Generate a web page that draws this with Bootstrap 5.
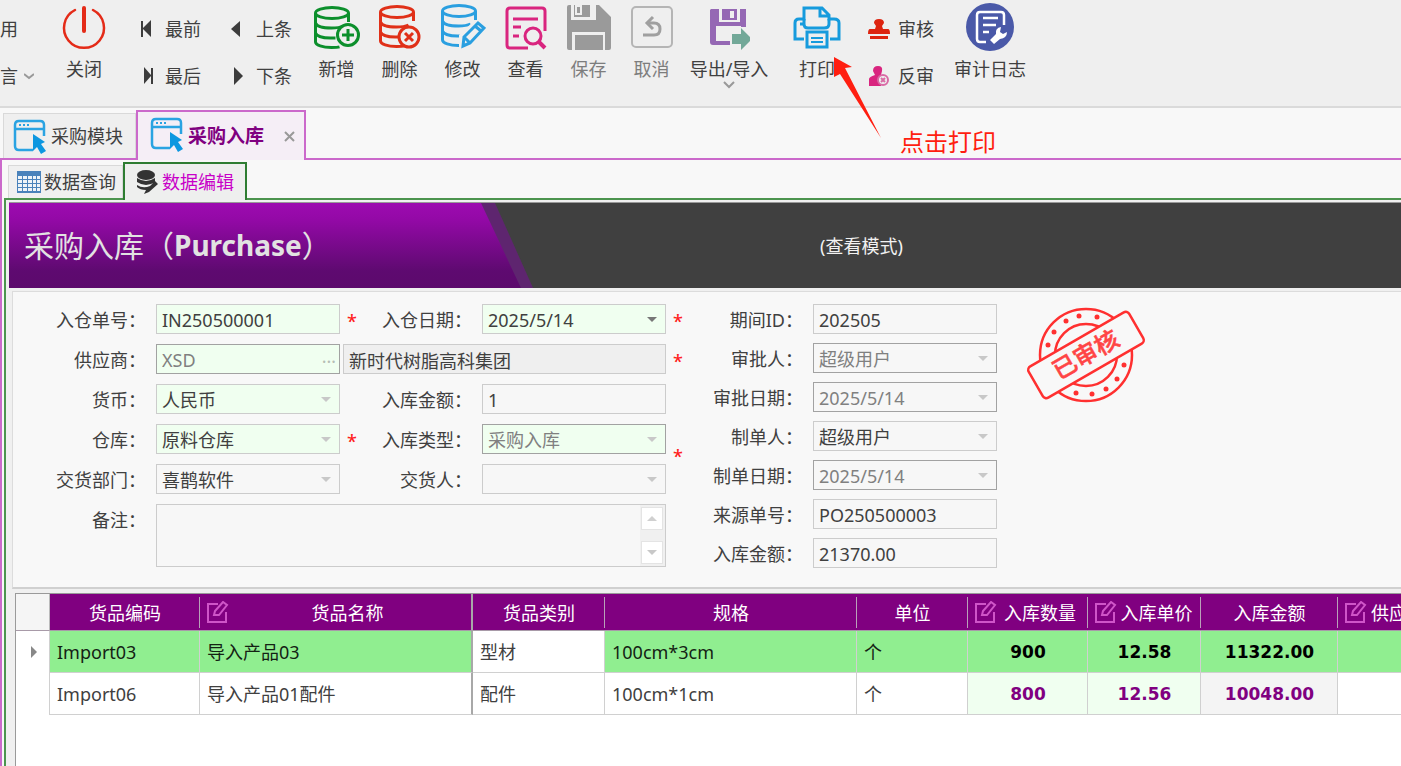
<!DOCTYPE html>
<html lang="zh-CN">
<head>
<meta charset="utf-8">
<meta name="viewport" content="width=device-width, initial-scale=1">
<title>采购入库</title>
<link href="https://cdn.jsdelivr.net/npm/bootstrap@5.3.0/dist/css/bootstrap.min.css" rel="stylesheet">
<style>
  body { font-family: "Noto Sans", "Noto Sans CJK SC", sans-serif; font-size: 18px; line-height: 24px; color: #404040; background: #f8f8f8; }
  button { font: inherit; color: inherit; background: none; border: 0; padding: 0; }
  svg { display: block; flex: none; }

  /* toolbar */
  .tool-strip { background: #efefef; border-bottom: 2px solid #dadada; height: 108px; white-space: nowrap; }
  .tool-big { display: flex; flex-direction: column; align-items: center; width: 63px; padding-top: 4px; gap: 7px; }
  .tool-pair { display: flex; flex-direction: column; gap: 23px; padding-top: 17px; }
  .tool-pair button { display: flex; align-items: center; gap: 8px; }
  .w-edge button { gap: 6px; }
  .w-close { width: 82px; } .w-nav1 { width: 90px; } .w-nav2 { width: 90px; }
  .w-edge { width: 43px; } .w-io { width: 92px; } .w-print { width: 84px; } .w-audit { width: 85px; }
  .is-off { color: #7d7d7d; }
  .callout-arrow { position: absolute; left: 58px; top: 56px; z-index: 3; }
  .callout-text { position: absolute; left: 125px; top: 125px; font-size: 24px; line-height: 34px; color: #ff1e10; z-index: 3; }

  /* module tabs */
  .mod-tabs { padding-left: 3px; height: 50px; }
  .mod-tab { border: 1px solid #d9d9d9; border-bottom: 0; background: #efefef; height: 45px; padding: 0 12px 0 9px; gap: 4px; display: flex; align-items: center; color: #404040; text-decoration: none; }
  .mod-tab.is-on { height: 50px; padding: 0 9px 0 12px; border: 2px solid #cb69cb; border-bottom: 0; background: #f5eef6; color: #800080; font-weight: 700; font-size: 19px; margin-bottom: -2px; }
  .mod-body { border: 2px solid #cb69cb; border-right: 0; border-bottom: 0; padding: 2px 0 0 2px; }

  /* page tabs */
  .pg-tabs { padding-left: 4px; height: 36px; }
  .pg-tab { border: 1px solid #d9d9d9; border-bottom: 0; background: #f0f0f0; height: 33px; padding: 0 6px 0 7px; gap: 2px; display: flex; align-items: center; color: #404040; text-decoration: none; }
  .pg-tab.is-on { height: 38px; border: 2px solid #2e7d32; border-bottom: 0; background: #eeefee; color: #c800c8; padding: 0 11px; gap: 4px; margin-bottom: -2px; position: relative; }
  .pg-body { border: 2px solid #4c944f; border-right: 0; border-bottom: 0; background: #f0f0f0; padding: 2px 0 0 3px; }

  /* banner */
  .banner { background: #404040; height: 86px; border-top: 1px solid #999; }
  .banner-edge { background: #5e256f; width: 524px; clip-path: polygon(0 0, 486px 0, 100% 100%, 0 100%); }
  .banner-title { background: linear-gradient(#9d0bb0, #9309a6 20%, #5e0a70 80%, #5c0a6c); color: #e2e2e2; height: 100%; width: 512px; clip-path: polygon(0 0, 472px 0, 100% 100%, 0 100%); display: flex; align-items: center; padding-left: 15px; }
  .banner-title h1 { font-size: 28px; font-weight: 700; margin: 0; display: flex; align-items: center; }
  .title-cn { font-size: 30px; font-weight: 400; }
  .banner-mode { color: #f2f2f2; margin-left: 287px; }

  /* form */
  .form-zone { background: #f8f8f8; border: 1px solid #dcdcdc; border-right: 0; margin: 3px 0 0 3px; height: 298px; padding-top: 12px; border-bottom: 2px solid #d0d0d0; }
  .main-grid { display: grid; grid-template-columns: 133px 184px 25px 117px 184px 25px; grid-auto-rows: 30px; row-gap: 10px; margin-left: 10px; }
  .side-grid { display: grid; grid-template-columns: 122px 184px; grid-auto-rows: 30px; row-gap: 9px; }
  .main-grid label, .side-grid label { text-align: right; padding-right: 10px; line-height: 32px; white-space: nowrap; }
  .fld { width: 100%; min-width: 0; height: 30px; border: 1px solid #cccccc; background-color: #f7f7f7; border-radius: 0; padding: 2px 5px 0; font: inherit; line-height: 24px; color: #404040; appearance: none; outline: 0; }
  .fld-req { background-color: #f0fff0; }
  .fld-lock { border-color: #a2a2a2; color: #808080; }
  .fld-name { background-color: #efefef; }
  select.fld { background-repeat: no-repeat; background-position: right 8px center; background-image: url("data:image/svg+xml,%3Csvg xmlns='http://www.w3.org/2000/svg' width='10' height='5'%3E%3Cpath d='M0 0h10L5 5z' fill='%23c8c8c8'/%3E%3C/svg%3E"); }
  select.fld-live { background-image: url("data:image/svg+xml,%3Csvg xmlns='http://www.w3.org/2000/svg' width='10' height='5'%3E%3Cpath d='M0 0h10L5 5z' fill='%23777777'/%3E%3C/svg%3E"); }
  .span-name { grid-column: 3 / 6; padding-left: 3px; }
  .must { color: #ff2020; padding-left: 7px; line-height: 34px; font-weight: 500; }
  .must-low { padding-top: 15px; }
  .lookup { position: relative; }
  .lookup button { position: absolute; right: 4px; top: 0; line-height: 24px; color: #b5bdb5; }
  .memo { grid-column: 2 / 6; height: 63px; border: 1px solid #cccccc; background: #f7f7f7; display: flex; }
  .memo textarea { flex: 1; border: 0; background: transparent; resize: none; outline: 0; }
  .memo-bar { width: 25px; background: #f0f0f0; display: flex; flex-direction: column; justify-content: space-between; padding: 2px 2px 2px 1px; }
  .memo-bar button { height: 23px; background: #fff; border: 1px solid #e4e4e4; display: flex; align-items: center; justify-content: center; }
  .seal { margin-left: 27px; }

  /* goods list */
  .list-zone { background: #fff; margin: 4px 0 0 6px; border: 1px solid #9a9a9a; border-right: 0; border-bottom: 0; overflow: hidden; min-height: 190px; }
  .goods { table-layout: fixed; width: 1500px; border-collapse: separate; border-spacing: 0; }
  .goods th { height: 37px; background: #800080 linear-gradient(#b9a0b9, #b9a0b9) right center / 1px 31px no-repeat; color: #fff; font-weight: 400; text-align: center; border-bottom: 1px solid #a89aa8; padding: 2px 5px 0; white-space: nowrap; }
  .goods th.corner { background: #f5f5f5; border-right: 1px solid #bbb; }
  .goods th span { flex: 1; }
  .goods td { height: 42px; padding: 0 6px 0 7px; border-right: 1px solid #d0d0d0; border-bottom: 1px solid #d0d0d0; }
  .goods .pin { border-right: 2px solid #a8a8a8; }
  .goods th.pin { background-image: none; }
  .goods tr.cur td { background: #90ee90; color: #142214; }
  .goods tr.cur td.plain { background: #fff; color: #404040; }
  .goods tr td.gut, .goods tr.cur td.gut { background: #fff; border-bottom: 0; }
  .goods td.num { font-family: "DejaVu Sans", sans-serif; font-size: 17px; font-weight: 700; text-align: center; color: #800080; }
  .goods tr.cur td.num { color: #000; }
  .soft { background: #f0fff0; } .dim { background: #f4f4f4; }
</style>
</head>
<body>
<svg width="0" height="0" class="position-absolute" aria-hidden="true">
  <defs>
    <g id="db" fill="none" stroke-width="3"><ellipse cx="18" cy="8" rx="16.500" ry="5.500"/><path d="M1.500 8v29c0 3 7 5.500 16 5.500 3 0 6 0 8-.6M34.500 8v9M1.500 18c1 3 7 5 16 5 5 0 9-.6 12-2M1.500 28c1 3 7 5 15 5h5"/></g>
    <g id="win"><path d="M31 17V6q0-4-4-4H6Q2 2 2 6v21q0 4 4 4h14M2 10h29" fill="none" stroke="#2aa3e2" stroke-width="2.500"/><path d="M6 6h2m2 0h2m2 0h2" stroke="#2aa3e2" stroke-width="2"/><path d="M20 15l12 8-4 2 5 7-5 3-4-7-4 4z" fill="#0d97e0"/></g>
    <g id="pen" fill="none" stroke="#cf55c8" stroke-width="2"><path d="M13 3H3v18h18V11"/><path d="M9 14l1-4 8-9 4 3-8 10z"/></g>
  </defs>
</svg>

<header class="tool-strip d-flex">
  <div class="tool-pair w-edge">
    <button type="button">用</button>
    <button type="button">言<svg width="10" height="7"><path d="M0 1l5 4 5-4" fill="none" stroke="#999" stroke-width="2"/></svg></button>
  </div>
  <button type="button" class="tool-big w-close">
    <svg width="46" height="46"><path d="M14 6a20 20 0 1 0 18 0" fill="none" stroke="#e42b18" stroke-width="2.500" stroke-linecap="round"/><path d="M23 4v23" stroke="#e42b18" stroke-width="4" stroke-linecap="round"/></svg>
    <span>关闭</span>
  </button>
  <div class="tool-pair w-nav1 ps-3">
    <button type="button"><svg width="16" height="18"><path d="M0 1h2v7l8-8v17l-8-8v8H0z" fill="#3c3c3c"/></svg>最前</button>
    <button type="button"><svg width="16" height="18"><path d="M12 1h-2v7L3 0v17l7-8v8h2z" fill="#3c3c3c"/></svg>最后</button>
  </div>
  <div class="tool-pair w-nav2 ps-3">
    <button type="button"><svg width="17" height="18"><path d="M0 9l9-8v16z" fill="#3c3c3c"/></svg>上条</button>
    <button type="button"><svg width="17" height="18"><path d="M12 9L3 0v18z" fill="#3c3c3c"/></svg>下条</button>
  </div>
  <button type="button" class="tool-big">
    <svg width="46" height="46" stroke="#0c8f2c"><use href="#db" y="1"/><circle cx="34" cy="31" r="10.500" fill="#efefef" stroke-width="3"/><path d="M34 25v12M28 31h12" stroke-width="3"/></svg>
    <span>新增</span>
  </button>
  <button type="button" class="tool-big">
    <svg width="42" height="46" stroke="#e03018"><use href="#db"/><circle cx="30" cy="33" r="10" fill="#efefef" stroke-width="3"/><path d="M26 29l8 8M34 29l-8 8" stroke-width="3"/></svg>
    <span>删除</span>
  </button>
  <button type="button" class="tool-big">
    <svg width="46" height="46" stroke="#2a9fe0"><use href="#db" x="1" y="-1"/><path d="M19 48V31L35 16h11v14L28 48z" fill="#efefef" stroke="none"/><path d="M24 33L38 19l6 5-14 15-7 3zM35 22l6 5M24 33l6 6" fill="none" stroke-width="3"/></svg>
    <span>修改</span>
  </button>
  <button type="button" class="tool-big">
    <svg width="42" height="46" fill="none" stroke="#d9257f" stroke-width="3"><path d="M40 27V7q0-3-3-3H5Q2 4 2 7v34q0 3 3 3h18M8 15h25M8 23h8M8 32h6"/><circle cx="28" cy="32" r="8"/><path d="M34 38l6 6" stroke-width="4"/></svg>
    <span>查看</span>
  </button>
  <button type="button" class="tool-big is-off">
    <svg width="46" height="46"><path d="M1 3q0-2 2-2h2v15h25V1h3l12 12v31q0 2-2 2h-4V28H6v18H3q-2 0-2-2zM8 1h16v12H8zM9 31h28v15H9z" fill="#9a9a9a"/><path d="M10 2h5v8h-5z" fill="#9a9a9a" stroke="#efefef" stroke-width="2"/></svg>
    <span>保存</span>
  </button>
  <button type="button" class="tool-big is-off">
    <svg width="42" height="46" fill="none"><rect x="1" y="3" width="40" height="40" rx="4" stroke="#b5b5b5" stroke-width="2"/><path d="M12 31h11q6 0 6-6t-6-6h-6" stroke="#a0a0a0" stroke-width="3"/><path d="M22 13l-6 6 6 6" stroke="#a0a0a0" stroke-width="3"/></svg>
    <span>取消</span>
  </button>
  <button type="button" class="tool-big w-io">
    <svg width="42" height="46"><path d="M3 5h8v13h21V5h6v18h-5v-1H8v15h14v4H5q-3 0-3-3V6zM14 5h15v11H14z" fill="#9568b4"/><path d="M22 7h4v7h-4z" fill="#efefef"/><path d="M24 30h9v-6l11 11-11 11v-6h-9z" fill="#72a898"/></svg>
    <span class="d-flex flex-column align-items-center">导出/导入<svg width="12" height="8"><path d="M1 1l5 5 5-5" fill="none" stroke="#999" stroke-width="2"/></svg></span>
  </button>
  <div class="position-relative">
    <button type="button" class="tool-big w-print">
      <svg width="50" height="46" fill="none" stroke="#169bdd" stroke-width="3"><path d="M12 35H3V19q0-4 4-4h5V4h18l7 7v4h5q5 0 5 4v16h-9M28 4v8h8"/><path d="M12 15v5q0 4 4 4h16q5 0 5-4v-5" /><path d="M15 28h20v15H15z"/><path d="M19 34h12M19 38h12" stroke-width="2"/><path d="M8 20h4" stroke-width="3"/></svg>
      <span>打印</span>
    </button>
    <svg class="callout-arrow" width="50" height="84"><path d="M1 1l18 10-7 1 36 70L7 18l-6 3z" fill="#ff1e10"/></svg>
    <div class="callout-text">点击打印</div>
  </div>
  <div class="tool-pair w-audit ps-2">
    <button type="button"><svg width="23" height="24" fill="#dd2410"><path d="M8 12l1-3-2-3q0-4 5-4t5 4l-2 3 1 3h5q2 0 2 5H1q0-5 2-5zM3 19h18v3H3z"/></svg>审核</button>
    <button type="button"><svg width="23" height="24" fill="#d9257f"><path d="M8 11l-2-4q0-5 5-5t4 5l-1 4 1 4-1 7H2v-7q0-2 6-4z"/><circle cx="16" cy="16" r="5" fill="#efefef" stroke="#d96aa5" stroke-width="2"/><path d="M14 14l4 4M18 14l-4 4" stroke="#d96aa5" stroke-width="2"/></svg>反审</button>
  </div>
  <button type="button" class="tool-big w-io">
    <svg width="48" height="46" viewBox="0 0 48 46" overflow="visible"><circle cx="24" cy="23" r="24" fill="#4a59a8"/><path d="M38 21V11q0-3-3-3H14q-3 0-3 3v24q0 3 3 3h6M17 14h15M17 21h13M17 28h6" fill="none" stroke="#fff" stroke-width="2.500"/><path d="M24 36l6-6q-1-6 5-7l-1 5 3 2 4-2q0 6-7 7l-6 5z" fill="#fff"/></svg>
    <span>审计日志</span>
  </button>
</header>

<nav class="mod-tabs d-flex align-items-end">
  <a href="#" class="mod-tab"><svg width="34" height="35"><use href="#win"/></svg>采购模块</a>
  <a href="#" class="mod-tab is-on"><svg class="mb-1" width="34" height="35"><use href="#win"/></svg>采购入库<svg class="ms-3" width="11" height="11"><path d="M1 1l9 9M10 1l-9 9" stroke="#999" stroke-width="2"/></svg></a>
</nav>

<div class="mod-body">
  <nav class="pg-tabs d-flex align-items-end">
    <a href="#" class="pg-tab"><svg width="26" height="24"><path d="M1 1h24v22H1z" fill="#4a82bb"/><path d="M2 6h4v3H2zm5 0h4v3H7zm5 0h4v3h-4zm5 0h3v3h-3zm4 0h3v3h-3zM2 10h4v3H2zm5 0h4v3H7zm5 0h4v3h-4zm5 0h3v3h-3zm4 0h3v3h-3zM2 14h4v3H2zm5 0h4v3H7zm5 0h4v3h-4zm5 0h3v3h-3zm4 0h3v3h-3zM2 18h4v3H2zm5 0h4v3H7zm5 0h4v3h-4zm5 0h3v3h-3zm4 0h3v3h-3z" fill="#eef3f8"/></svg>数据查询</a>
    <a href="#" class="pg-tab is-on"><svg width="22" height="25"><ellipse cx="10" cy="5" rx="9" ry="5" fill="#333"/><path d="M1 8q9 6 18 0v4q-9 6-18 0zM1 15q6 4 13 1l-4 4q-6 0-9-3zM8 24l2-4 9-9 3 3-9 8z" fill="#333"/></svg>数据编辑</a>
  </nav>

  <main class="pg-body">
    <div class="banner d-flex align-items-center">
      <div class="banner-edge h-100"><div class="banner-title"><h1><span class="title-cn">采购入库（</span>Purchase<span class="title-cn">）</span></h1></div></div>
      <div class="banner-mode">(查看模式)</div>
    </div>

    <form class="form-zone d-flex align-items-start">
      <div class="main-grid">
        <label for="f1">入仓单号：</label><input id="f1" class="fld fld-req" value="IN250500001">
        <span class="must">*</span>
        <label for="f2">入仓日期：</label><select id="f2" class="fld fld-req fld-live"><option>2025/5/14</option></select>
        <span class="must">*</span>

        <label for="f3">供应商：</label>
        <div class="lookup"><input id="f3" class="fld fld-req fld-lock" value="XSD"><button type="button" aria-label="选择供应商">…</button></div>
        <div class="span-name"><input class="fld fld-name" aria-label="供应商名称" value="新时代树脂高科集团"></div>
        <span class="must">*</span>

        <label for="f4">货币：</label><select id="f4" class="fld fld-req"><option>人民币</option></select>
        <span></span>
        <label for="f5">入库金额：</label><input id="f5" class="fld" value="1">
        <span></span>

        <label for="f6">仓库：</label><select id="f6" class="fld fld-req"><option>原料仓库</option></select>
        <span class="must">*</span>
        <label for="f7">入库类型：</label><select id="f7" class="fld fld-req fld-lock"><option>采购入库</option></select>
        <span class="must must-low">*</span>

        <label for="f8">交货部门：</label><select id="f8" class="fld"><option>喜鹊软件</option></select>
        <span></span>
        <label for="f9">交货人：</label><select id="f9" class="fld"><option></option></select>
        <span></span>

        <label for="f10">备注：</label>
        <div class="memo"><textarea id="f10"></textarea>
          <div class="memo-bar">
            <button type="button" aria-label="上"><svg width="10" height="5"><path d="M0 5l5-5 5 5z" fill="#d0d0d0"/></svg></button>
            <button type="button" aria-label="下"><svg width="10" height="5"><path d="M0 0l5 5 5-5z" fill="#c8c8c8"/></svg></button>
          </div>
        </div>
      </div>

      <div class="side-grid">
        <label for="s1">期间ID：</label><input id="s1" class="fld" value="202505">
        <label for="s2">审批人：</label><select id="s2" class="fld fld-lock"><option>超级用户</option></select>
        <label for="s3">审批日期：</label><select id="s3" class="fld fld-lock"><option>2025/5/14</option></select>
        <label for="s4">制单人：</label><select id="s4" class="fld"><option>超级用户</option></select>
        <label for="s5">制单日期：</label><select id="s5" class="fld fld-lock"><option>2025/5/14</option></select>
        <label for="s6">来源单号：</label><input id="s6" class="fld" value="PO250500003">
        <label for="s7">入库金额：</label><input id="s7" class="fld" value="21370.00">
      </div>

      <svg class="seal" width="124" height="100">
        <g fill="none" stroke="#ff3030" stroke-width="2.500"><circle cx="62" cy="51" r="46"/><circle cx="62" cy="51" r="31"/></g>
        <g fill="#ff3030"><circle cx="24" cy="41" r="2.500"/><circle cx="30" cy="28" r="2.500"/><circle cx="42" cy="17" r="2.500"/><circle cx="55" cy="12" r="2.500"/><circle cx="73" cy="13" r="2.500"/><circle cx="100" cy="61" r="2.500"/><circle cx="93" cy="75" r="2.500"/><circle cx="82" cy="85" r="2.500"/><circle cx="68" cy="90" r="2.500"/><circle cx="52" cy="89" r="2.500"/></g>
        <g transform="rotate(-30 62 51)"><rect x="4" y="33" width="116" height="36" rx="4" fill="#f8f8f8" stroke="#ff3030" stroke-width="2.500"/><text x="62" y="59" text-anchor="middle" font-size="24" font-weight="500" fill="#ff4545" stroke="#ff4545" stroke-width=".5">已审核</text></g>
      </svg>
    </form>

    <div class="list-zone">
      <table class="goods">
        <colgroup><col style="width:34px"><col style="width:150px"><col style="width:273px"><col style="width:132px"><col style="width:252px"><col style="width:111px"><col style="width:120px"><col style="width:113px"><col style="width:137px"><col></colgroup>
        <thead>
          <tr>
            <th class="corner"></th><th>货品编码</th>
            <th class="pin"><div class="d-flex align-items-center"><svg width="24" height="24"><use href="#pen"/></svg><span>货品名称</span></div></th>
            <th>货品类别</th><th>规格</th><th>单位</th>
            <th><div class="d-flex align-items-center"><svg width="24" height="24"><use href="#pen"/></svg><span>入库数量</span></div></th>
            <th><div class="d-flex align-items-center"><svg width="24" height="24"><use href="#pen"/></svg><span>入库单价</span></div></th>
            <th>入库金额</th>
            <th><div class="d-flex align-items-center gap-1"><svg width="24" height="24"><use href="#pen"/></svg><span class="text-start">供应商</span></div></th>
          </tr>
        </thead>
        <tbody>
          <tr class="cur"><td class="gut"><svg class="ms-2" width="6" height="12"><path d="M0 0l6 6-6 6z" fill="#888"/></svg></td><td>Import03</td><td class="pin">导入产品03</td><td class="plain">型材</td><td>100cm*3cm</td><td>个</td><td class="num">900</td><td class="num">12.58</td><td class="num">11322.00</td><td></td></tr>
          <tr><td class="gut"></td><td>Import06</td><td class="pin">导入产品01配件</td><td>配件</td><td>100cm*1cm</td><td>个</td><td class="num soft">800</td><td class="num soft">12.56</td><td class="num dim">10048.00</td><td></td></tr>
        </tbody>
      </table>
    </div>
  </main>
</div>
<script src="https://cdn.jsdelivr.net/npm/bootstrap@5.3.0/dist/js/bootstrap.bundle.min.js"></script>
</body>
</html>
